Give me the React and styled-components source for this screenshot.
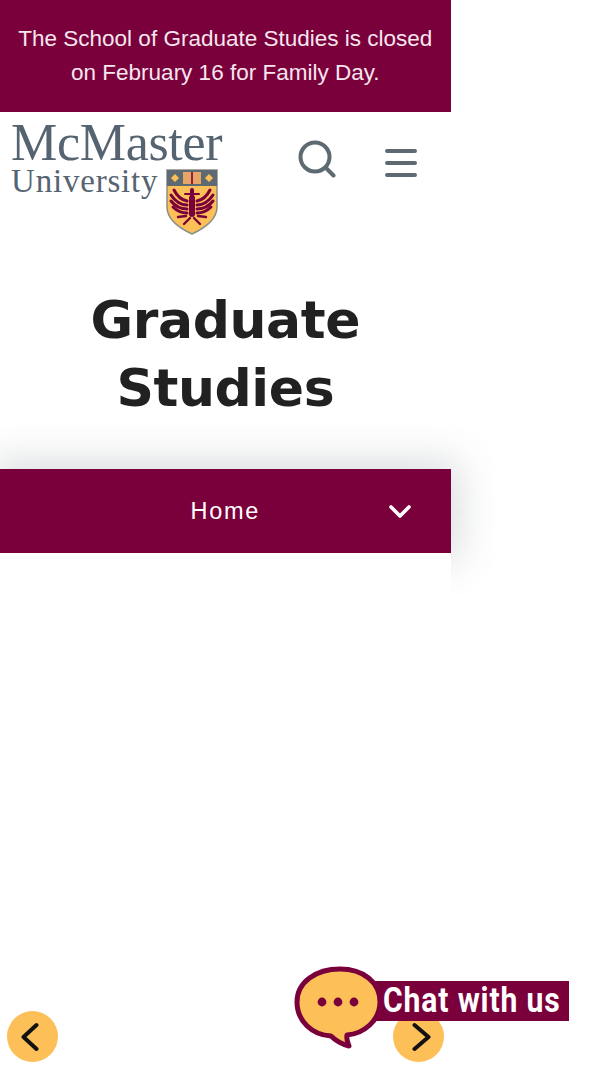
import React from "react";
import styled, { createGlobalStyle } from "styled-components";

const MAROON = "#7a003c";
const SLATE = "#5e6a71";

const GlobalStyle = createGlobalStyle`
  html, body {
    margin: 0;
    padding: 0;
    background: #fff;
    overflow: hidden;
  }
`;

const Page = styled.div`
  position: relative;
  width: 600px;
  height: 1065px;
  overflow: hidden;
`;

const Column = styled.div`
  width: 450.6px;
  height: 1065px;
  display: flex;
  flex-direction: column;
`;

const Notice = styled.div`
  height: 112.3px;
  box-sizing: border-box;
  padding-top: 22px;
  background: ${MAROON};
  color: #f6e6ee;
  font: 22.5px/34px "Liberation Sans", Arial, sans-serif;
  text-align: center;
  white-space: nowrap;
`;

const Header = styled.header`
  height: 123.7px;
  box-sizing: border-box;
  padding: 8px 0 0 11px;
  display: flex;
  align-items: flex-start;
`;

const Logo = styled.div`
  width: 213px;
  display: flex;
  flex-direction: column;
  font-family: "Liberation Serif", "Times New Roman", serif;
  color: #556470;
`;

const LogoTop = styled.div`
  font-size: 52px;
  line-height: 45px;
  letter-spacing: -0.3px;
  white-space: nowrap;
`;

const LogoBottom = styled.div`
  display: flex;
  align-items: flex-start;
  gap: 8px;
`;

const LogoSub = styled.div`
  font-size: 33px;
  line-height: 32px;
  letter-spacing: 0.8px;
  white-space: nowrap;
`;

const Shield = styled.svg`
  width: 52px;
  height: 66px;
  margin-top: 4px;
  flex: none;
`;

const HeaderIcons = styled.div`
  display: flex;
  align-items: flex-start;
  margin-left: 74px;
  margin-top: 20px;
  gap: 49px;
`;

const MenuIcon = styled.svg`
  margin-top: 8px;
`;

const Title = styled.h1`
  margin: 50px 0 0;
  font: 700 52px/68px "DejaVu Sans", Inter, sans-serif;
  letter-spacing: -0.4px;
  color: #212121;
  text-align: center;
`;

const NavBar = styled.div`
  position: relative;
  margin-top: 47px;
  height: 84.4px;
  box-sizing: border-box;
  padding-top: 2px;
  flex: none;
  background: ${MAROON};
  color: #fff;
  display: flex;
  align-items: center;
  justify-content: center;
  font: 400 23.5px/1 "Liberation Sans", Arial, sans-serif;
  letter-spacing: 1.7px;
  box-shadow: 0 0 40px 8px rgba(70, 80, 90, 0.2);
`;

const Chevron = styled.svg`
  position: absolute;
  right: 39px;
  top: 35px;
`;

const Body = styled.main`
  position: relative;
  flex: 1;
  background: #fff;
`;

const RoundButton = styled.div`
  position: absolute;
  top: 1011px;
  left: ${(p) => p.$left}px;
  width: 51px;
  height: 51px;
  border-radius: 50%;
  background: #fdbf57;
  display: flex;
  align-items: center;
  justify-content: center;
`;

const ChatWidget = styled.div`
  position: absolute;
  left: 294px;
  top: 966px;
  width: 276px;
  height: 84px;
`;

const ChatLabel = styled.div`
  position: absolute;
  left: 72px;
  top: 14.5px;
  width: 203px;
  height: 40.5px;
  background: ${MAROON};
  color: #fff;
  font: 700 35px/40px Roboto, sans-serif;
  white-space: nowrap;
  overflow: hidden;
`;

const ChatText = styled.span`
  display: inline-block;
  margin-left: 17px;
  letter-spacing: 1px;
  transform: scaleX(0.86);
  transform-origin: left center;
`;

const ChatBubble = styled.svg`
  position: absolute;
  left: 0;
  top: 0;
`;

function McMasterShield() {
  return (
    <Shield viewBox="0 0 52 66">
      <path d="M1 1H51V38C51 51 39 59 26 65C13 59 1 51 1 38Z" fill="#fdbf57" stroke="#8a8f8a" strokeWidth="1.5" />
      <rect x="1" y="1" width="50" height="16" fill={SLATE} />
      <path d="M5 9L9 5L13 9L9 13Z M39 9L43 5L47 9L43 13Z" fill="#fdbf57" />
      <rect x="17" y="3" width="18" height="12" fill="#e8a465" />
      <rect x="25.2" y="3" width="1.6" height="12" fill="#7a003c" />
      <g stroke="#7a003c" strokeWidth="3" strokeLinecap="round" fill="none">
        <path d="M26 29V45" strokeWidth="6" />
        <path d="M21 32C16 31 11 27 8 21" />
        <path d="M21 36C15 36 9 32 5 26" />
        <path d="M21 40C15 40 9 37 5 32" />
        <path d="M21 44C16 44 11 42 7 38" />
        <path d="M31 32C36 31 41 27 44 21" />
        <path d="M31 36C37 36 43 32 47 26" />
        <path d="M31 40C37 40 43 37 47 32" />
        <path d="M31 44C36 44 41 42 45 38" />
        <path d="M26 21V27" strokeWidth="4" />
        <path d="M19 25H24M28 25H33" strokeWidth="2" />
        <path d="M12 48L20 47M40 48L32 47M18 55L24 49M34 55L28 49" strokeWidth="2.4" />
      </g>
    </Shield>
  );
}

export default function App() {
  return (
    <Page>
      <GlobalStyle />
      <Column>
        <Notice>
          The School of Graduate Studies is closed
          <br />
          on February 16 for Family Day.
        </Notice>
        <Header>
          <Logo>
            <LogoTop>McMaster</LogoTop>
            <LogoBottom>
              <LogoSub>University</LogoSub>
              <McMasterShield />
            </LogoBottom>
          </Logo>
          <HeaderIcons>
            <svg width="38" height="38" viewBox="0 0 38 38" fill="none" stroke={SLATE} strokeWidth="4" strokeLinecap="round">
              <circle cx="17" cy="17" r="14.5" />
              <path d="M28 28L35.5 35.5" />
            </svg>
            <MenuIcon width="32" height="30" viewBox="0 0 32 30" fill="none" stroke={SLATE} strokeWidth="4" strokeLinecap="round">
              <path d="M2 3H30M2 15H30M2 27H30" />
            </MenuIcon>
          </HeaderIcons>
        </Header>
        <Title>
          Graduate
          <br />
          Studies
        </Title>
        <NavBar>
          Home
          <Chevron width="24" height="16" viewBox="0 0 24 16" fill="none" stroke="#fff" strokeWidth="3.6" strokeLinecap="round" strokeLinejoin="round">
            <path d="M3 3L12 12L21 3" />
          </Chevron>
        </NavBar>
        <Body />
      </Column>

      <RoundButton $left={7}>
        <svg width="24" height="32" viewBox="0 0 24 32" fill="none" stroke="#111" strokeWidth="4" strokeLinecap="round" strokeLinejoin="round">
          <path d="M15.5 4L2.5 16L15.5 28" />
        </svg>
      </RoundButton>
      <RoundButton $left={393}>
        <svg width="24" height="32" viewBox="0 0 24 32" fill="none" stroke="#111" strokeWidth="4" strokeLinecap="round" strokeLinejoin="round">
          <path d="M7.5 4L21.5 16L7.5 28" />
        </svg>
      </RoundButton>

      <ChatWidget>
        <ChatLabel>
          <ChatText>Chat with us</ChatText>
        </ChatLabel>
        <ChatBubble width="92" height="84" viewBox="0 0 92 84">
          <path
            d="M46 3C69 3 86 16 86 36C86 55 69 68 53 69C52 73 54 77 55 80C47 78 41 74 37 70C18 69 3 55 3 36C3 16 22 3 46 3Z"
            fill="#fdbf57"
            stroke="#7a003c"
            strokeWidth="5"
            strokeLinejoin="round"
          />
          <circle cx="28" cy="36" r="4.4" fill="#7a003c" />
          <circle cx="44" cy="36" r="4.4" fill="#7a003c" />
          <circle cx="60" cy="36" r="4.4" fill="#7a003c" />
        </ChatBubble>
      </ChatWidget>
    </Page>
  );
}
